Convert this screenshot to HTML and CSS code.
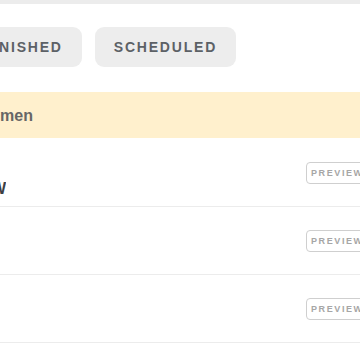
FILE: index.html
```html
<!DOCTYPE html>
<html>
<head>
<meta charset="utf-8">
<link rel="stylesheet" href="styles.css">
</head>
<body>
<div class="topbar"></div>
<div class="tabs">
  <div class="chip">FINISHED</div>
  <div class="chip">SCHEDULED</div>
</div>
<div class="banner">
  <div class="clip banner-label"><span>Specimen</span></div>
</div>
<div class="list">
  <div class="row">
    <div class="clip row-title"><span>NEW</span></div>
    <button class="preview">PREVIEW</button>
  </div>
  <div class="row">
    <div class="clip row-title"></div>
    <button class="preview">PREVIEW</button>
  </div>
  <div class="row">
    <div class="clip row-title"></div>
    <button class="preview">PREVIEW</button>
  </div>
</div>
</body>
</html>
```
FILE: styles.css
```css
html, body {
  margin: 0;
  padding: 0;
  background: #ffffff;
  overflow: hidden;
  font-family: "Liberation Sans", Arial, sans-serif;
}
.topbar {
  height: 4px;
  background: #ececec;
}
.tabs {
  display: flex;
  gap: 13px;
  margin-top: 23px;
  margin-left: -36px;
}
.chip {
  height: 40px;
  padding: 0 19px;
  display: flex;
  align-items: center;
  background: #ededed;
  border-radius: 9px;
  font-size: 14px;
  font-weight: bold;
  letter-spacing: 1.8px;
  color: #5c6166;
  white-space: nowrap;
  flex-shrink: 0;
}
.banner {
  margin-top: 25px;
  height: 46px;
  background: #fff0cd;
  display: flex;
  align-items: center;
}
.clip {
  display: flex;
  justify-content: flex-end;
  overflow: hidden;
  white-space: nowrap;
}
.banner-label {
  width: 33px;
  font-size: 16px;
  font-weight: bold;
  color: #666666;
  line-height: 16px;
  padding-top: 2px;
}
.list {
  margin-top: 1px;
}
.row {
  box-sizing: border-box;
  height: 68px;
  border-bottom: 1px solid #ececec;
  display: flex;
  align-items: center;
  justify-content: space-between;
}
.row-title {
  width: 6px;
  align-self: flex-start;
  margin-top: 42px;
  font-size: 16px;
  line-height: 16px;
  font-weight: bold;
  color: #3c4043;
}
.preview {
  flex-shrink: 0;
  box-sizing: border-box;
  width: 64px;
  height: 22px;
  margin-right: -10px;
  padding: 0 0 0 4px;
  text-align: left;
  background: #ffffff;
  border: 1px solid #cfcfcf;
  border-radius: 4px;
  font-family: "Liberation Sans", Arial, sans-serif;
  font-size: 9px;
  font-weight: bold;
  letter-spacing: 1.6px;
  color: #a6a6a6;
  white-space: nowrap;
  overflow: hidden;
}
```
